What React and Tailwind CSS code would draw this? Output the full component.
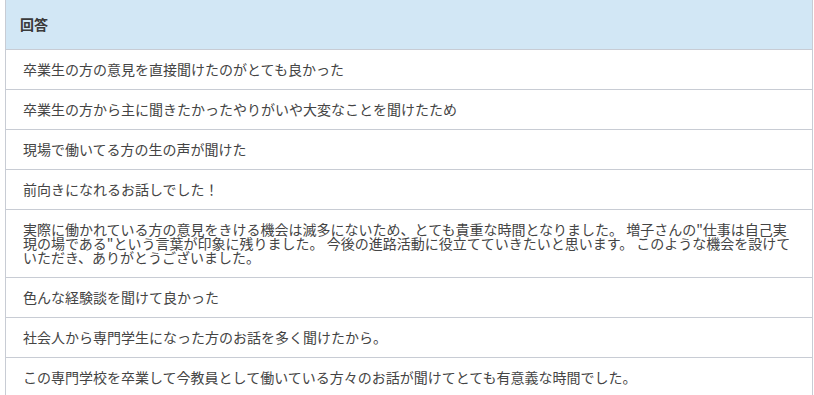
import React from "react";

const answers = [
  "卒業生の方の意見を直接聞けたのがとても良かった",
  "卒業生の方から主に聞きたかったやりがいや大変なことを聞けたため",
  "現場で働いてる方の生の声が聞けた",
  "前向きになれるお話しでした！",
  "実際に働かれている方の意見をきける機会は滅多にないため、とても貴重な時間となりました。 増子さんの\"仕事は自己実現の場である\"という言葉が印象に残りました。 今後の進路活動に役立てていきたいと思います。 このような機会を設けていただき、ありがとうございました。",
  "色んな経験談を聞けて良かった",
  "社会人から専門学生になった方のお話を多く聞けたから。",
  "この専門学校を卒業して今教員として働いている方々のお話が聞けてとても有意義な時間でした。",
];

export default function App() {
  return (
    <div
      className="min-h-screen bg-white pl-[5px] pr-px overflow-hidden"
      style={{ fontFamily: '"Noto Sans CJK JP", "Noto Sans", sans-serif' }}
    >
      <table className="w-full border-collapse border-x border-[#c8ccd4] text-[#444]">
        <thead>
          <tr className="bg-[#d2e7f5] border-b border-[#c8ccd4]">
            <th className="h-[49px] pl-[14px] text-left text-[14px] font-bold text-[#3a3a3a]">
              回答
            </th>
          </tr>
        </thead>
        <tbody>
          {answers.map((a, i) => (
            <tr key={i} className="border-b border-[#c8ccd4]">
              <td className="pl-[17px] pr-5 pt-3 pb-[13px] text-[14px] leading-[14px]">
                {a}
              </td>
            </tr>
          ))}
        </tbody>
      </table>
    </div>
  );
}
